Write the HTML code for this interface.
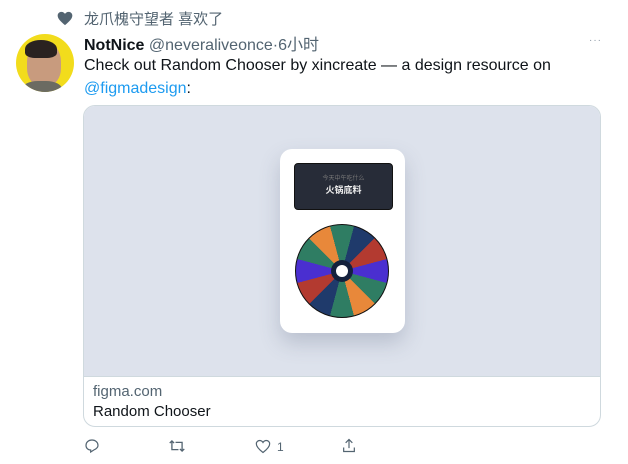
<!DOCTYPE html>
<html><head><meta charset="utf-8"><style>
body{margin:0;width:628px;height:464px;background:#fff;font-family:"Liberation Sans","Noto Sans CJK SC",sans-serif;position:relative;overflow:hidden;color:#0f1419}
.a{position:absolute}
</style></head><body>
<svg class="a" style="left:57px;top:11px" width="16" height="15" viewBox="0 0 24 22"><path d="M12 21 C5 15 1 11 1 6.5 1 3 3.8 1 6.8 1 9 1 11 2.3 12 4 13 2.3 15 1 17.2 1 20.2 1 23 3 23 6.5 23 11 19 15 12 21Z" fill="#536471"/></svg>
<div class="a" style="left:84px;top:8px;font-size:15px;color:#536471">龙爪槐守望者 喜欢了</div>
<div class="a" style="left:16px;top:34px;width:58px;height:58px;border-radius:50%;background:#f2dc1c;overflow:hidden">
<div class="a" style="left:11px;top:8px;width:34px;height:44px;border-radius:45% 45% 40% 40%;background:#c89b7e"></div>
<div class="a" style="left:9px;top:6px;width:32px;height:18px;border-radius:50% 50% 30% 30%;background:#2a2220"></div>
<div class="a" style="left:6px;top:47px;width:40px;height:20px;border-radius:40%;background:#6b6b62"></div>
</div>
<div class="a" style="left:84px;top:31px;font-size:16px;white-space:nowrap"><b>NotNice</b> <span style="color:#536471">@neveraliveonce·6小时</span></div>
<div class="a" style="left:589px;top:35px;font-size:10px;color:#8b98a5;letter-spacing:1px">···</div>
<div class="a" style="left:84px;top:54px;font-size:16px;line-height:23px;width:520px">Check out Random Chooser by xincreate — a design resource on <span style="color:#1d9bf0">@figmadesign</span>:</div>
<div class="a" style="left:83px;top:105px;width:516px;height:320px;border:1px solid #cfd9de;border-radius:12px;overflow:hidden">
<div class="a" style="left:0;top:0;width:516px;height:270px;background:#dde2ec;border-bottom:1px solid #cfd9de">
<div class="a" style="left:196px;top:43px;width:125px;height:184px;background:#fff;border-radius:12px;box-shadow:0 10px 20px rgba(80,90,120,.25)">
<div class="a" style="left:14px;top:14px;width:97px;height:45px;background:#272c38;border-radius:4px;border:1px solid #111"></div>
<div class="a" style="left:14px;top:24px;width:99px;text-align:center;font-size:6px;color:#777">今天中午吃什么</div>
<div class="a" style="left:14px;top:34px;width:99px;text-align:center;font-size:9px;color:#eee;font-weight:bold">火锅底料</div>
<div class="a" style="left:15px;top:75px;width:92px;height:92px;border-radius:50%;border:1px solid #111;background:conic-gradient(from -15deg,#2f7d63 0 30deg,#1f3a6b 30deg 60deg,#b33a30 60deg 90deg,#4a2fd0 90deg 120deg,#2f7d63 120deg 150deg,#e8883a 150deg 180deg,#2f7d63 180deg 210deg,#1f3a6b 210deg 240deg,#b33a30 240deg 270deg,#4a2fd0 270deg 300deg,#2f7d63 300deg 330deg,#e8883a 330deg 360deg)"></div>
<div class="a" style="left:51px;top:111px;width:22px;height:22px;border-radius:50%;background:#14213d"></div>
<div class="a" style="left:56px;top:116px;width:12px;height:12px;border-radius:50%;background:#fff"></div>
</div>
</div>
<div class="a" style="left:9px;top:277px;font-size:15px;color:#536471">figma.com</div>
<div class="a" style="left:9px;top:297px;font-size:15px">Random Chooser</div>
</div>
<svg class="a" style="left:84px;top:438px" width="16" height="16" viewBox="0 0 24 24" fill="none" stroke="#536471" stroke-width="1.8"><path d="M12 3C6.5 3 3 6.5 3 11c0 4 3 7 7 7v3l5-3.2C19 16 21 13.5 21 11c0-4.5-3.8-8-9-8z"/></svg>
<svg class="a" style="left:168px;top:438px" width="18" height="16" viewBox="0 0 24 22" fill="none" stroke="#536471" stroke-width="1.8"><path d="M5 4v12h9M2 7l3-3 3 3M19 18V6h-9M16 15l3 3 3-3"/></svg>
<svg class="a" style="left:255px;top:439px" width="16" height="15" viewBox="0 0 24 22" fill="none" stroke="#536471" stroke-width="1.8"><path d="M12 20C5 14.5 2 11 2 7 2 4 4.3 2 7 2c2 0 4 1.3 5 3 1-1.7 3-3 5-3 2.7 0 5 2 5 5 0 4-3 7.5-10 13z"/></svg>
<div class="a" style="left:277px;top:440px;font-size:12px;color:#536471">1</div>
<svg class="a" style="left:341px;top:437px" width="16" height="17" viewBox="0 0 24 24" fill="none" stroke="#536471" stroke-width="1.8"><path d="M12 3v13M7 8l5-5 5 5M4 15v6h16v-6"/></svg>
</body></html>
